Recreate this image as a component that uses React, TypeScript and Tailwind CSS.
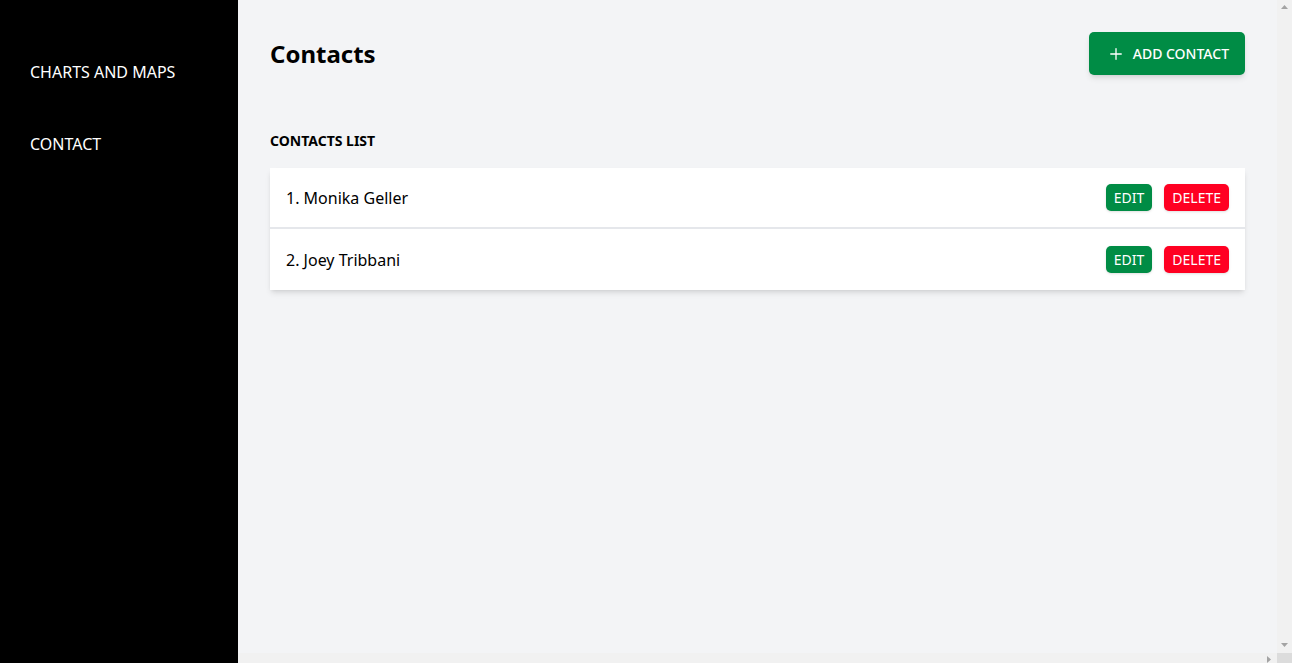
import { Plus } from 'lucide-react';

const contacts = [
  { id: 1, name: 'Monika Geller' },
  { id: 2, name: 'Joey Tribbani' },
];

const navItems = ['CHARTS AND MAPS', 'CONTACT'];

function Arrow({ dir }: { dir: 'up' | 'down' | 'right' }) {
  const points = {
    up: '0,4 3.5,0 7,4',
    down: '0,0 7,0 3.5,4',
    right: '0,0 4,3.5 0,7',
  }[dir];
  const size = dir === 'right' ? { w: 4, h: 7 } : { w: 7, h: 4 };
  return (
    <svg width={size.w} height={size.h} viewBox={`0 0 ${size.w} ${size.h}`}>
      <polygon points={points} fill="#a3a3a3" />
    </svg>
  );
}

export default function App() {
  return (
    <div className="flex h-[663px] w-full overflow-hidden font-['Noto_Sans',sans-serif]">
      {/* Sidebar */}
      <aside className="w-[238px] shrink-0 bg-black pt-[36px]">
        {navItems.map((item) => (
          <a key={item} href="#" className="flex h-[72px] items-center px-[30px] text-base text-white">
            {item}
          </a>
        ))}
      </aside>

      {/* Main with its scrollbars */}
      <div className="flex min-w-0 flex-1 flex-col">
        <div className="flex min-h-0 flex-1">
          <main className="flex-1 bg-gray-100 px-8 pt-8">
            <div className="flex items-center justify-between">
              <h1 className="text-2xl font-bold text-black">Contacts</h1>
              <button className="flex h-[43px] items-center gap-2 rounded-[5px] bg-[#008c45] pr-4 pl-[18px] text-sm font-medium text-white shadow-md">
                <Plus size={18} strokeWidth={1.75} />
                ADD CONTACT
              </button>
            </div>

            <h2 className="mt-[56px] text-sm font-bold text-black">CONTACTS LIST</h2>

            <ul className="mt-[17px] bg-white shadow-md">
              {contacts.map((c) => (
                <li
                  key={c.id}
                  className="flex h-[61px] items-center justify-between border-b-2 border-gray-200 px-4 last:border-b-0"
                >
                  <span className="text-base text-black">
                    {c.id}. {c.name}
                  </span>
                  <div className="flex items-center gap-3">
                    <button className="h-[27px] rounded-[5px] bg-[#008c45] px-2 text-sm text-white shadow-sm">
                      EDIT
                    </button>
                    <button className="h-[27px] rounded-[5px] bg-[#ff0022] px-2 text-sm text-white shadow-sm">
                      DELETE
                    </button>
                  </div>
                </li>
              ))}
            </ul>
          </main>

          {/* vertical scrollbar */}
          <div className="flex w-[15px] flex-col items-center justify-between bg-[#f1f1f1] pt-[5px] pb-[6px]">
            <Arrow dir="up" />
            <Arrow dir="down" />
          </div>
        </div>

        {/* horizontal scrollbar */}
        <div className="flex h-[10px] shrink-0">
          <div className="flex flex-1 items-start justify-end bg-[#f1f1f1] pt-[3px] pr-[6px]">
            <Arrow dir="right" />
          </div>
          <div className="w-[15px] bg-[#dcdcdc]" />
        </div>
      </div>
    </div>
  );
}
